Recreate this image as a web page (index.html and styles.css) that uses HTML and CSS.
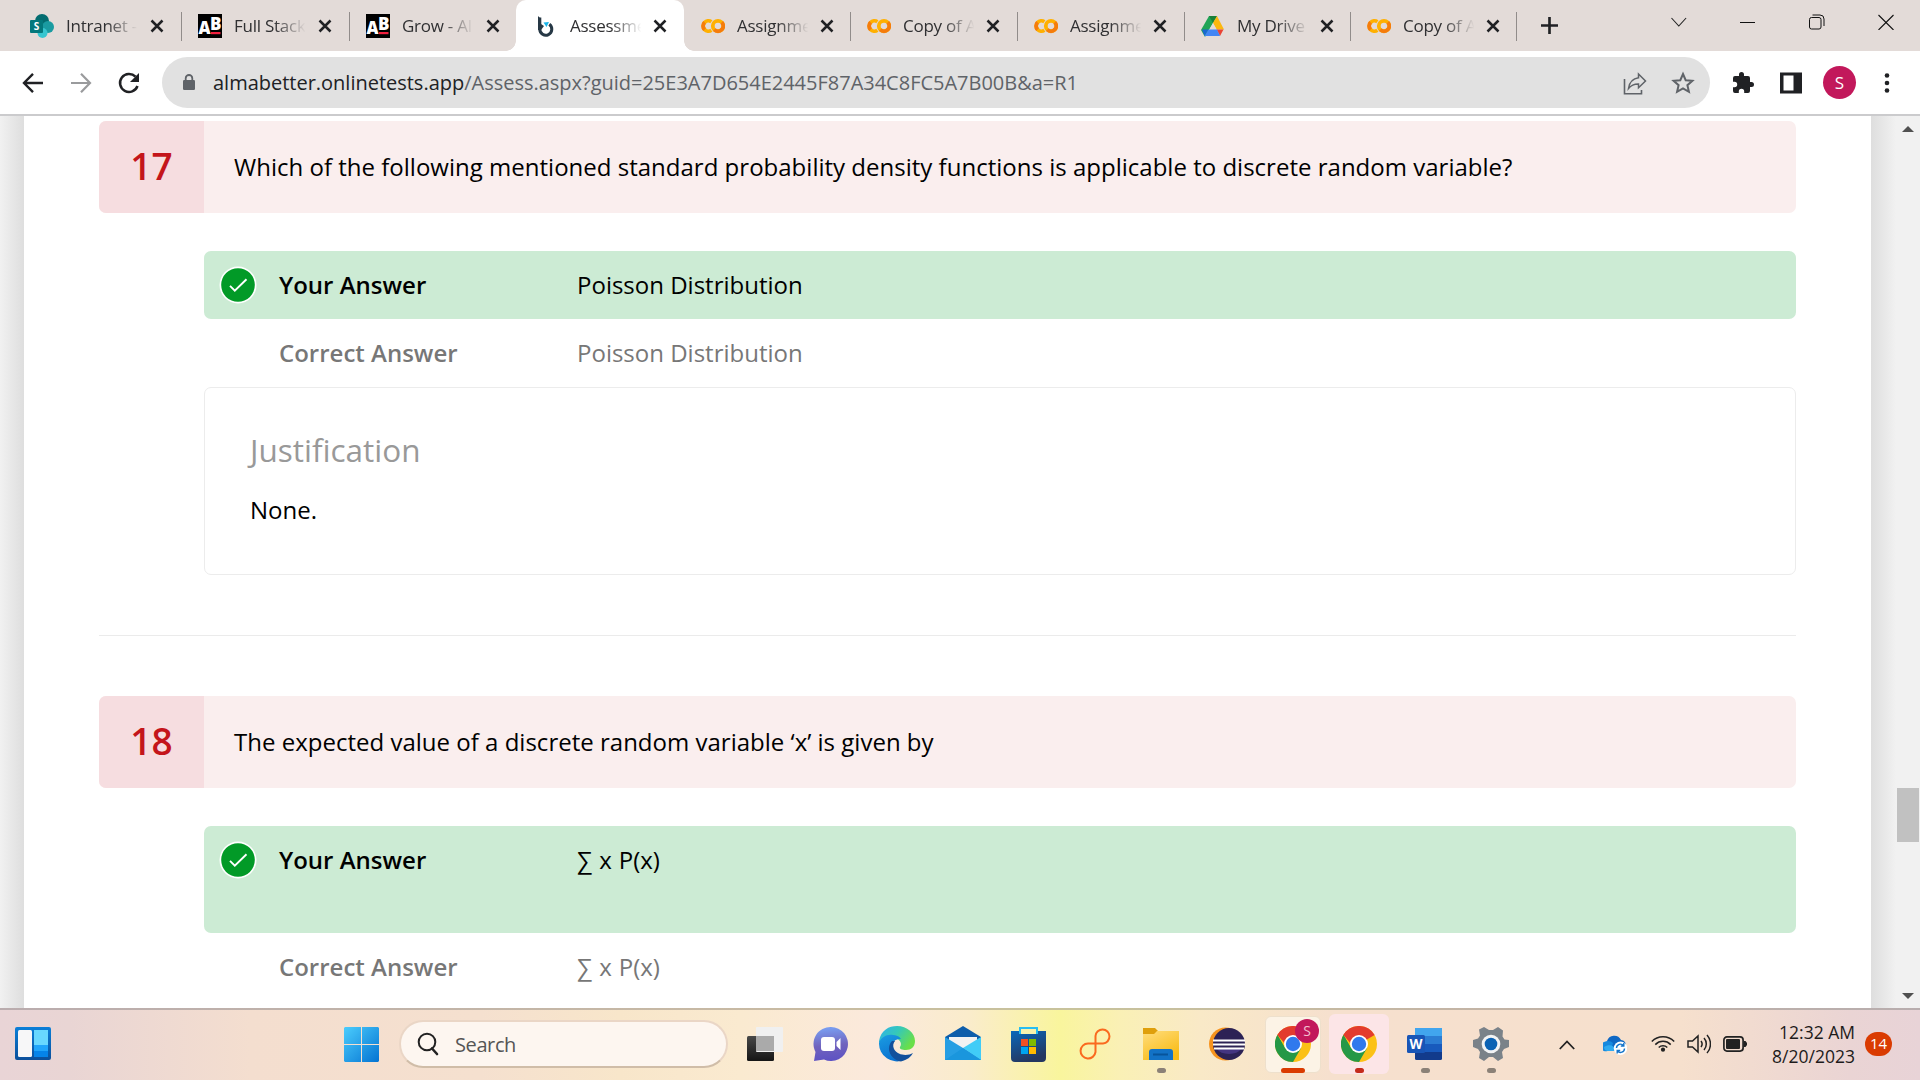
FILE: index.html
```html
<!DOCTYPE html>
<html lang="en">
<head>
<meta charset="utf-8">
<title>Assessment</title>
<link rel="stylesheet" href="styles.css">
</head>
<body>
<svg class="defs" width="0" height="0">
  <symbol id="close" viewBox="0 0 14 14"><path d="M1.500 1.500l11 11M12.500 1.500l-11 11" fill="none" stroke="#202124" stroke-width="2.500"/></symbol>
  <symbol id="ab" viewBox="0 0 24 24"><rect width="24" height="24"/><text x="0.500" y="20" font-family="Open Sans, sans-serif" font-weight="800" font-size="18" fill="#fff" textLength="12" lengthAdjust="spacingAndGlyphs">A</text><text x="12" y="16" font-family="Open Sans, sans-serif" font-weight="800" font-size="17" fill="#fff" textLength="11.500" lengthAdjust="spacingAndGlyphs">B</text><path d="M13 18h9.500v2.200H13z" fill="#f01f3e"/></symbol>
  <symbol id="colab" viewBox="0 0 24 24"><g fill="none" stroke-width="3.800"><path d="M10.400 7.700A5.200 5.200 0 1 0 10.400 16.300" stroke="#ffb000"/><path d="M3.600 8.300A5.200 5.200 0 0 0 3.600 15.700" stroke="#f57c0c"/><circle cx="17" cy="12" r="5.200" stroke="#ffb000"/><path d="M20.700 8.300A5.200 5.200 0 0 1 13.300 15.700" stroke="#f57c0c"/></g></symbol>
  <symbol id="chrome" viewBox="0 0 36 36"><circle cx="18" cy="18" r="18" fill="#fbc116"/><path d="M18 18L2.400 9A18 18 0 0 1 33.600 9z" fill="#e33b2e"/><path d="M2.400 9A18 18 0 0 0 18 36l7.800-13.500L18 18l-7.800 4.500z" fill="#259847"/><path d="M2.400 9l3-4L18 9l-7.800 9z" fill="#e33b2e"/><path d="M2.400 9l7.800 13.500L14 25l-7 5A18 18 0 0 1 2.400 9z" fill="#259847"/><circle cx="18" cy="18" r="9" fill="#fff"/><circle cx="18" cy="18" r="7.200" fill="#3079ed"/></symbol>
  <symbol id="tick" viewBox="0 0 38 38"><circle cx="19" cy="19" r="18.500" fill="#fff"/><circle cx="19" cy="19" r="16.800" fill="#029a27"/><path d="M11 19.800l4.800 4.800L27.500 13.200" fill="none" stroke="#fff" stroke-width="1.900"/></symbol>
</svg>

<header class="tabstrip">
  <div class="tab wide"><svg class="fav" viewBox="0 0 24 24"><circle cx="12" cy="7" r="7" fill="#036c70"/><circle cx="18" cy="13" r="6" fill="#1a9ba1"/><circle cx="12.500" cy="19" r="5" fill="#37c6d0"/><rect y="6" width="13" height="13" rx="1" fill="#03787c"/><text x="6.500" y="16" text-anchor="middle" font-family="Open Sans, sans-serif" font-size="10" font-weight="700" fill="#fff">S</text></svg><span class="title">Intranet - Home</span><svg class="x"><use href="#close"/></svg></div>
  <div class="tab wide"><svg class="fav"><use href="#ab"/></svg><span class="title">Full Stack Data</span><svg class="x"><use href="#close"/></svg></div>
  <div class="tab wide before-active"><svg class="fav"><use href="#ab"/></svg><span class="title">Grow - AlmaBetter</span><svg class="x"><use href="#close"/></svg></div>
  <div class="tab active"><svg class="fav" viewBox="0 0 24 24"><path d="M5.800 3.500V15a6 6 0 1 0 9.500-4.700" fill="none" stroke="#263845" stroke-width="3"/><path d="M4 2l3 3v5l3 2-3 4H4z" fill="#263845"/><path d="M9.500 8.500L15 8l-2.500 5z" fill="#18b5ea"/></svg><span class="title">Assessment</span><svg class="x"><use href="#close"/></svg></div>
  <div class="tab w166"><svg class="fav"><use href="#colab"/></svg><span class="title">Assignment</span><svg class="x"><use href="#close"/></svg></div>
  <div class="tab w167"><svg class="fav"><use href="#colab"/></svg><span class="title">Copy of Assign</span><svg class="x"><use href="#close"/></svg></div>
  <div class="tab w167"><svg class="fav"><use href="#colab"/></svg><span class="title">Assignment</span><svg class="x"><use href="#close"/></svg></div>
  <div class="tab w166"><svg class="fav" viewBox="0 0 24 24"><path d="M8 2h8l-4 7-8 14-4-7z" fill="#20a456"/><path d="M8 2h8l-4 7z" fill="#188038"/><path d="M12 9l4-7 7 13.500h-7.500z" fill="#fbb80f"/><path d="M12 9l4 7H8z" fill="#e3dbd8"/><path d="M1 15.500h6.500L3.500 22z" fill="#1967d2"/><path d="M15.500 15.500H22.500L19 22z" fill="#ea4335"/><path d="M7.500 15.500h8.500l3 6.500H3.500z" fill="#4285f4"/></svg><span class="title">My Drive - G</span><svg class="x"><use href="#close"/></svg></div>
  <div class="tab w166"><svg class="fav"><use href="#colab"/></svg><span class="title">Copy of Assign</span><svg class="x"><use href="#close"/></svg></div>
  <svg class="newtab" viewBox="0 0 18 18"><path d="M9 0v18M0 9h18" stroke="#202124" stroke-width="2.800"/></svg>
  <div class="winctl">
    <svg viewBox="0 0 16 16"><path d="M.5 4l7.300 8 7.300-8" fill="none" stroke="#222" stroke-width="1.100"/></svg>
    <svg viewBox="0 0 16 16"><path d="M0 8.500h15" stroke="#111"/></svg>
    <svg viewBox="0 0 16 16"><rect x=".5" y="3.500" width="11.500" height="11.500" rx="2" fill="none" stroke="#111"/><path d="M3.500 1H11a4 4 0 0 1 4 4v7" fill="none" stroke="#111"/></svg>
    <svg viewBox="0 0 16 16"><path d="M.5 1l15 15M15.500 1l-15 15" stroke="#111" stroke-width="1.100"/></svg>
  </div>
</header>

<nav class="toolbar">
  <div class="navbtns">
    <svg viewBox="0 0 24 24"><path d="M22 12H3.500M12 2.800L3 12l9 9.200" fill="none" stroke="#202124" stroke-width="2.400"/></svg>
    <svg viewBox="0 0 24 24"><path d="M2 12h18.500M12 2.800L21 12l-9 9.200" fill="none" stroke="#9a9b9d" stroke-width="2.200"/></svg>
    <svg viewBox="0 0 24 24"><path d="M20.500 15A9 9 0 1 1 18.500 5.700" fill="none" stroke="#202124" stroke-width="2.500"/><path d="M22 2v9h-9z" fill="#202124"/></svg>
  </div>
  <div class="omnibox">
    <svg class="lock" viewBox="0 0 12 17"><rect y="6" width="12" height="10" rx="1.200" fill="#5f6368"/><path d="M2.700 7V4.300a3.300 3.300 0 0 1 6.600 0V7" fill="none" stroke="#5f6368" stroke-width="1.800"/></svg>
    <span class="url"><b>almabetter.onlinetests.app</b>/Assess.aspx?guid=25E3A7D654E2445F87A34C8FC5A7B00B&amp;a=R1</span>
    <svg class="share" viewBox="0 0 24 24"><path d="M1.500 7v14.700h17V18" fill="none" stroke="#5f6368" stroke-width="1.600"/><path d="M15.500 2l7 7-7 6.800v-3.700C11 12 8 13.500 5.500 16.500 6.500 10 10 6.500 15.500 5.800z" fill="none" stroke="#5f6368" stroke-width="1.500"/></svg>
    <svg class="star" viewBox="0 0 24 24"><path d="M12 3l2.700 6.200 6.700.6-5 4.400 1.500 6.600L12 17.300l-5.900 3.500 1.500-6.600-5-4.400 6.700-.6z" fill="none" stroke="#5f6368" stroke-width="2"/></svg>
  </div>
  <div class="actions">
    <svg viewBox="0 0 24 24"><path d="M20.500 11H19V7a2 2 0 0 0-2-2h-4V3.500a2.500 2.500 0 0 0-5 0V5H4a2 2 0 0 0-2 2v3.800h1.500a2.700 2.700 0 0 1 0 5.400H2V20a2 2 0 0 0 2 2h3.800v-1.500a2.700 2.700 0 0 1 5.400 0V22H17a2 2 0 0 0 2-2v-4h1.500a2.500 2.500 0 0 0 0-5z" fill="#202124"/></svg>
    <svg viewBox="0 0 24 24"><path d="M1 1.500h22v21H1zM4.500 4.500v15h10v-15z" fill="#202124" fill-rule="evenodd"/></svg>
    <span class="avatar">S</span>
    <svg viewBox="0 0 24 24" fill="#202124"><circle cx="12" cy="4.500" r="2.300"/><circle cx="12" cy="12" r="2.300"/><circle cx="12" cy="19.500" r="2.300"/></svg>
  </div>
</nav>

<div class="viewport">
  <main class="page">
    <section class="question">
      <h2 class="prompt"><span class="num">17</span><span class="ptext">Which of the following mentioned standard probability density functions is applicable to discrete random variable?</span></h2>
      <div class="answers">
        <div class="row yours"><svg class="tick"><use href="#tick"/></svg><span class="label">Your Answer</span><span class="value">Poisson Distribution</span></div>
        <div class="row correct"><span class="label">Correct Answer</span><span class="value">Poisson Distribution</span></div>
        <div class="justification"><h3>Justification</h3><p>None.</p></div>
      </div>
    </section>
    <hr>
    <section class="question">
      <h2 class="prompt"><span class="num">18</span><span class="ptext">The expected value of a discrete random variable ‘x’ is given by</span></h2>
      <div class="answers">
        <div class="row yours tall"><svg class="tick"><use href="#tick"/></svg><span class="label">Your Answer</span><span class="value sum">∑ x P(x)</span></div>
        <div class="row correct"><span class="label">Correct Answer</span><span class="value sum">∑ x P(x)</span></div>
      </div>
    </section>
  </main>
  <div class="scrollbar"><i class="up"></i><i class="thumb"></i><i class="down"></i></div>
</div>

<footer class="taskbar">
  <svg class="widgets" viewBox="0 0 36 33"><defs><linearGradient id="wg" x2="0" y2="1"><stop stop-color="#0a7fd8"/><stop offset="1" stop-color="#0b4f9b"/></linearGradient></defs><rect width="36" height="33" rx="2" fill="url(#wg)"/><rect x="3" y="3" width="14" height="27" rx="1.500" fill="#f7f7f8"/><path d="M19 3h14v15H19z" fill="#68d8ff"/><path d="M19 18h14v6H19z" fill="#20a5fb"/><path d="M19 24h14v6H19z" fill="#0584ea"/></svg>
  <svg class="start" viewBox="0 0 35 35"><defs><linearGradient id="st" x2="1" y2="1"><stop stop-color="#4bcdfd"/><stop offset="1" stop-color="#0473d2"/></linearGradient></defs><path d="M1 0h16v17H0V1zM18 0h16l1 1v16H18zM0 18h17v17H1l-1-1zM18 18h17v16l-1 1H18z" fill="url(#st)"/></svg>
  <div class="search"><svg viewBox="0 0 24 24"><circle cx="11" cy="10" r="8.300" fill="none" stroke="#222" stroke-width="2"/><path d="M16 16.500l5 5.500" stroke="#222" stroke-width="2.600" stroke-linecap="round"/></svg><span>Search</span></div>
  <div class="apps">
    <div class="app"><svg viewBox="0 0 36 36"><defs><linearGradient id="tv" x2="0" y2="1"><stop stop-color="#484848"/><stop offset="1" stop-color="#151515"/></linearGradient></defs><rect y="10" width="27" height="25" rx="1.500" fill="url(#tv)"/><rect x="9" y="1" width="27" height="25" rx="1" fill="#f0f0f0"/><path d="M9 10h18v15H9z" fill="#aaa"/></svg></div>
    <div class="app"><svg viewBox="0 0 36 36"><defs><linearGradient id="ch" x1=".9" y2="1"><stop stop-color="#789bef"/><stop offset=".5" stop-color="#7163bd"/><stop offset="1" stop-color="#5b50c4"/></linearGradient></defs><path d="M18 1a17 17 0 1 1-7 32.500L1 35l1.500-9A17 17 0 0 1 18 1z" fill="url(#ch)"/><rect x="8" y="11" width="14" height="14" rx="3" fill="#fff"/><path d="M23.500 16l4-4v12l-4-4z" fill="#fff"/></svg></div>
    <div class="app"><svg viewBox="0 0 36 36"><defs><linearGradient id="e1" x2="1" y2=".5"><stop stop-color="#2fb0ee"/><stop offset=".5" stop-color="#35c8ba"/><stop offset="1" stop-color="#69df49"/></linearGradient><linearGradient id="e2" x2=".4" y2="1"><stop stop-color="#1b9de2"/><stop offset="1" stop-color="#0b72d0"/></linearGradient></defs><path d="M0 15C2 4 10 0 18 0c10 0 18 7 18 15 0 6-4 9-9 9-4 0-7-1-6-3 3-4-1-9-7-9C6 12 1 14 0 18z" fill="url(#e1)"/><path d="M0 17c2-6 8-9 14-8 6 0 8 4 8 4-7-1-9 5-8 9 1 7 6 11 11 12A18 18 0 0 1 0 17z" fill="url(#e2)"/><path d="M13 15c-6 6-3 18 9 20.500C28 34 32 31 34 27c-5 3-15 3-19-4-1.300-3-1-6 1-8z" fill="#12509c"/></svg></div>
    <div class="app"><svg viewBox="0 0 36 36"><path d="M0 11L18 0l18 11v10H0z" fill="#0d5dab"/><path d="M4 11h28v7l-14 9L4 18z" fill="#f2f2f2"/><path d="M0 11l36 22v1H0z" fill="#269ee3"/><path d="M36 11L18 22l18 12z" fill="#41ccf7"/><path d="M0 34l18-12 18 12z" fill="#1a96dd"/></svg></div>
    <div class="app"><svg viewBox="0 0 36 36"><defs><linearGradient id="ms" x2=".4" y2="1"><stop stop-color="#0a68bb"/><stop offset="1" stop-color="#243760"/></linearGradient></defs><path d="M9 8V2h17v6" fill="none" stroke="#27bdf2" stroke-width="2"/><path d="M0 5H8v3H27V5h8v27a4 4 0 0 1-4 4h-27a4 4 0 0 1-4-4z" fill="url(#ms)"/><path d="M10 13h7v7h-7z" fill="#f25022"/><path d="M18 13h7v7h-7z" fill="#7fba00"/><path d="M10 21h7v7h-7z" fill="#00a4ef"/><path d="M18 21h7v7h-7z" fill="#ffb900"/></svg></div>
    <div class="app"><svg viewBox="0 0 36 36"><path d="M18.500 17.500h7.500a7 7 0 1 0-7.500-7.500V26a7.500 7.500 0 1 1-7.500-8.500z" fill="none" stroke="#fa6a1f" stroke-width="2"/></svg></div>
    <div class="app"><svg viewBox="0 0 36 36"><defs><linearGradient id="fd" x2=".6" y2="1"><stop stop-color="#ffdd7d"/><stop offset="1" stop-color="#f9bc17"/></linearGradient></defs><path d="M0 2h12l3 3-4 4H0z" fill="#df9f0b"/><path d="M0 8h11l3-3h22v29H0z" fill="url(#fd)"/><path d="M6 34V26a3 3 0 0 1 3-3h18a3 3 0 0 1 3 3v8z" fill="#1272c6"/><path d="M10 28.500h15" stroke="#07549b" stroke-width="2"/></svg><i class="ind"></i></div>
    <div class="app"><svg viewBox="0 0 36 36"><circle cx="16.500" cy="18" r="16.500" fill="#f7941e"/><circle cx="20" cy="18" r="16" fill="#2c2255"/><path d="M8 23h24a13 8 0 0 1-24 0z" fill="#443581"/><path d="M4 14.500h32M4 18.500h32M5 22.500h30" stroke="#fff" stroke-width="1.800"/></svg></div>
    <div class="app"><div class="tile focus"></div><svg><use href="#chrome"/></svg><span class="profile">S</span><i class="ind wide"></i></div>
    <div class="app"><div class="tile alert"></div><svg><use href="#chrome"/></svg><i class="ind red"></i></div>
    <div class="app"><svg viewBox="0 0 36 36"><rect x="8" y="2" width="27" height="32" rx="1.500" fill="#123b8c"/><path d="M8 2h27v8H8z" fill="#41a5ee"/><path d="M8 10h27v8H8z" fill="#2b7cd3"/><path d="M8 18h27v8H8z" fill="#185abd"/><rect y="9" width="18" height="18" rx="1.500" fill="#1855b6"/><text x="9" y="23" text-anchor="middle" font-family="Open Sans, sans-serif" font-weight="700" font-size="14" fill="#fff" textLength="13" lengthAdjust="spacingAndGlyphs">W</text></svg><i class="ind"></i></div>
    <div class="app"><svg viewBox="0 0 36 36"><path d="M11 1l5 3h4l5-3 5 3.500-.5 6 2 3L36 14v7l-5 2-2 3 1 6-5 3-5-4h-4l-5 4-5-3 1-6-2-3-5-2v-7l5-1.500 2-3-1-6z" fill="#7a8289"/><circle cx="18" cy="18" r="9.300" fill="#f2f3f4"/><circle cx="18" cy="18" r="6.300" fill="#0b62b4"/></svg><i class="ind"></i></div>
  </div>
  <div class="tray">
    <svg class="chev" viewBox="0 0 16 10"><path d="M.8 9L8 1.500 15.200 9" fill="none" stroke="#222" stroke-width="1.800"/></svg>
    <svg class="cloud" viewBox="0 0 24 20"><path d="M4 6a7.500 7.500 0 0 1 14-1c3 0 5 3 5 5l-9 5H2z" fill="#0f68c4"/><path d="M1 7c4-2 7-1 9 1l-2 8H4.500A4.600 4.600 0 0 1 1 7z" fill="#1789de"/><path d="M1 12c5-3 10-2 13 4H4.500A4 4 0 0 1 1 12z" fill="#30aaf0"/><circle cx="17.500" cy="13.300" r="6.700" fill="#fff"/><path d="M13.500 13a4 4 0 0 1 7-2.500M21.500 13.500a4 4 0 0 1-7 2.600M20.800 8v3h-3M14.200 18.500v-3h3" fill="none" stroke="#1474ca" stroke-width="1.400"/></svg>
    <svg class="wifi" viewBox="0 0 24 18"><g fill="none" stroke="#222" stroke-width="1.500"><path d="M.8 7.500a15.500 15.500 0 0 1 22.400 0M4.300 10.600a10.800 10.800 0 0 1 15.400 0M7.700 13.500a6.400 6.400 0 0 1 8.600 0"/></g><circle cx="12" cy="15.700" r="2.100" fill="#222"/></svg>
    <svg class="vol" viewBox="0 0 24 20"><g fill="none" stroke="#222" stroke-width="1.500"><path d="M1 7h4.500L11 2v16l-5.500-5H1zM14 7a5 5 0 0 1 0 6M17 4a9 9 0 0 1 0 12M20 1a13.500 13.500 0 0 1 0 18"/></g></svg>
    <svg class="bat" viewBox="0 0 24 16"><rect x=".9" y=".9" width="19.200" height="14.200" rx="3" fill="none" stroke="#222" stroke-width="1.700"/><rect x="3" y="3" width="14" height="10" rx="1" fill="#222"/><path d="M21 5h1.500L24 7v2l-1.500 2H21z" fill="#222"/></svg>
    <div class="clock"><span class="time">12:32 AM</span><span class="date">8/20/2023</span></div>
    <span class="badge">14</span>
  </div>
</footer>
</body>
</html>
```
FILE: styles.css
```css
* { box-sizing: border-box; }
body { margin: 0; width: 1920px; height: 1080px; overflow: hidden; display: flex; flex-direction: column; font-family: "Open Sans", "Noto Sans", sans-serif; background: #fff; color: #000; }
svg { display: block; flex: none; }
.defs { position: absolute; }

/* Tab strip */
.tabstrip { height: 51px; background: #e3dbd8; display: flex; align-items: center; padding-left: 14px; flex: none; }
.tab { position: relative; width: 168px; height: 51px; padding-left: 16px; display: flex; align-items: center; z-index: 1; }
.tab.w166 { width: 166px; }
.tab.w167 { width: 167px; }
.tab.active { width: 167px; z-index: 0; }
.tab::after { content: ""; position: absolute; right: 0; top: 12px; width: 1.5px; height: 29px; background: #918c8a; }
.tab.before-active::after { display: none; }
.tab.active::after { left: -2px; right: auto; top: 0; width: 168px; height: 51px; background: #fff; border-radius: 10px 10px 0 0; z-index: -1; }
.tab.active::before { content: ""; position: absolute; left: -12px; bottom: 0; width: 188px; height: 10px; z-index: -1; background: radial-gradient(circle at 0 0, transparent 9.5px, #fff 10px) left / 10px 10px no-repeat, radial-gradient(circle at 100% 0, transparent 9.5px, #fff 10px) right / 10px 10px no-repeat; }
.fav { width: 24px; height: 24px; margin-top: 1px; }
.title { width: 73px; margin-left: 12px; overflow: hidden; white-space: nowrap; font-size: 17px; line-height: 30px; letter-spacing: -.25px; color: #303032; -webkit-mask-image: linear-gradient(90deg, #000 55%, transparent 98%); mask-image: linear-gradient(90deg, #000 55%, transparent 98%); }
.x { width: 14px; height: 14px; margin-left: 10px; }
.wide .x { margin-left: 11px; }
.newtab { width: 17px; height: 17px; margin-left: 24px; }
.winctl { margin: -8px 26px 0 auto; display: flex; gap: 53px; }
.winctl svg { width: 16px; height: 16px; }

/* Address bar */
.toolbar { height: 65px; flex: none; display: flex; align-items: center; padding-left: 21px; border-bottom: 2px solid #cbcbcd; }
.navbtns { display: flex; gap: 24px; width: 141px; }
.navbtns svg, .actions svg { width: 24px; height: 24px; }
.omnibox { width: 1548px; height: 51px; border-radius: 26px; background: #e1e1e1; display: flex; align-items: center; padding-left: 21px; }
.lock { width: 12px; height: 17px; }
.url { margin-left: 18px; font-size: 20px; line-height: 30px; width: 1396px; white-space: nowrap; color: #5f6368; letter-spacing: -.01px; }
.url b { font-weight: 400; color: #202124; }
.share { width: 24px; height: 24px; margin: 2px 0 0 14px; }
.star { width: 24px; height: 24px; margin-left: 24px; }
.actions { display: flex; align-items: center; gap: 24px; margin-left: 21px; }
.avatar { width: 33px; height: 33px; border-radius: 50%; margin: 0 -5px 0 -4px; background: #c2185b; color: #fff; font-size: 17px; line-height: 33px; text-align: center; }

/* Scrolled page */
.viewport { height: 892px; flex: none; display: flex; overflow: hidden; background: linear-gradient(90deg, #f1f1f1, #dedede 24px, #dedede 1871px, #f1f1f1 1896px); }
.page { width: 1847px; margin-left: 24px; background: #fff; padding: 5px 75px 0; }
.scrollbar { width: 24px; margin-left: auto; background: #f1f1f1; display: flex; flex-direction: column; align-items: center; }
.scrollbar i { display: block; }
.up, .down { border: 6px solid transparent; width: 0; height: 0; }
.up { border-bottom-color: #505050; border-top-width: 0; margin-top: 10px; }
.thumb { width: 22px; height: 54px; background: #c1c1c1; margin-top: 656px; }
.down { border-top-color: #505050; border-bottom-width: 0; margin-top: 151px; }
.prompt { margin: 0; width: 1697px; height: 92px; display: flex; border-radius: 7px; overflow: hidden; background: #faeeee; font-weight: 400; }
.num { width: 105px; background: #f6dde0; color: #c4151b; font-size: 37px; font-weight: 600; line-height: 89px; text-align: center; }
.ptext { padding-left: 30px; font-size: 24px; line-height: 92px; white-space: nowrap; letter-spacing: .01px; }
.answers { margin: 38px 0 0 105px; width: 1592px; }
.row { position: relative; height: 68px; padding-left: 75px; display: flex; font-size: 24px; line-height: 68px; }
.yours { background: #ccebd4; border-radius: 7px; }
.yours.tall { height: 107px; }
.correct { color: #777; }
.tick { position: absolute; left: 15px; top: 15px; width: 38px; height: 38px; }
.label { width: 298px; font-weight: 600; }
.sum { word-spacing: .8px; }
.justification { height: 188px; border: 1px solid #ececec; border-radius: 7px; padding: 39px 45px; }
.justification h3 { margin: 0; font-size: 31.5px; font-weight: 400; line-height: 46px; color: #999; }
.justification p { margin: 19px 0 0; font-size: 24px; line-height: 36px; }
hr { width: 1697px; height: 1px; margin: 60px 0; border: 0; background: #ebebeb; }

/* Taskbar */
.taskbar { height: 72px; flex: none; border-top: 2px solid #bbaead; display: flex; align-items: center; padding-left: 15px; background: linear-gradient(90deg, #e9d4d6 0, #e9d5d4 70px, #f4decf 250px, #f5e0cf 480px, #f8e6ca 620px, #faead0 740px, #fbe9dc 880px, #faeccb 970px, #f9f59d 1060px, #faf0b5 1120px, #f9e9c7 1200px, #f6e0ce 1330px, #f6e0cd 1680px, #ead4d4 1850px, #e8d3d7); border-image: linear-gradient(90deg, #baacae, #c8baa3 40%, #c8c39b 56%, #c4b5a5 75%, #b8adae) 1; }
.widgets { width: 36px; height: 33px; margin-top: -3px; }
.start { width: 35px; height: 35px; margin-left: 293px; margin-top: -1px; }
.search { width: 329px; height: 48px; margin: -2px 0 0 20px; border-radius: 24px; background: #fdf6f0; border: 2px solid #ead6c6; border-bottom-color: #d0bda8; display: flex; align-items: center; padding-left: 15px; }
.search svg { width: 24px; height: 24px; }
.search span { margin-left: 15px; font-size: 20px; color: #555; letter-spacing: -.4px; }
.apps { display: flex; margin-left: 4px; }
.app { position: relative; width: 66px; height: 70px; padding: 16px 15px; }
.app svg { position: relative; width: 36px; height: 36px; }
.ind { position: absolute; left: 28.5px; bottom: 7px; width: 9px; height: 5px; border-radius: 3px; background: #8b8177; }
.ind.red { background: #c42b1c; }
.ind.wide { left: 21px; width: 24px; background: #da3b01; }
.tile { position: absolute; border-radius: 6px; }
.tile.focus { left: 5px; top: 6px; width: 56px; height: 57px; background: #fcf3e6; border: 1px solid #eee0cc; }
.tile.alert { left: 3px; top: 4px; width: 60px; height: 60px; background: #fce5e7; }
.profile { position: absolute; left: 35px; top: 9px; width: 24px; height: 24px; border-radius: 50%; background: #c2185b; color: #f2bfd0; font-size: 14px; line-height: 24px; text-align: center; }
.tray { display: flex; align-items: center; margin-left: 35px; }
.chev { width: 16px; height: 10px; }
.cloud { width: 24px; height: 20px; margin-left: 28px; }
.wifi { width: 24px; height: 18px; margin-left: 24px; margin-top: -4px; }
.vol { width: 24px; height: 20px; margin-left: 12px; margin-top: -2px; }
.bat { width: 24px; height: 16px; margin-left: 12px; margin-top: -3px; }
.clock { width: 108px; display: flex; flex-direction: column; align-items: flex-end; font-size: 17.5px; line-height: 24px; color: #1d1b1b; margin-top: -3px; white-space: nowrap; }
.badge { width: 27px; height: 24px; margin: -2px 0 0 10px; border-radius: 13px; background: #da3b01; color: #fff; font-size: 15px; line-height: 23px; text-align: center; }
```
